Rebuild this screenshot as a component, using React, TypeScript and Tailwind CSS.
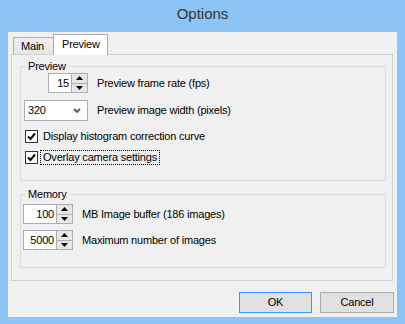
import React from 'react';

const font = "font-['Liberation_Sans',Arial,sans-serif]";

const Spin = ({ value, width }: { value: string; width: string }) => (
  <div className={`${width} h-[20px] border border-[#abadb3] bg-white flex`}>
    <div className="flex-1 flex items-center justify-end pr-[2px] text-[11px] tracking-[-0.2px] text-black">{value}</div>
    <div className="w-[16px] flex flex-col border-l border-[#acacac] bg-[#e6e6e6]">
      <div className="flex-1 flex items-center justify-center">
        <svg width="7" height="4" viewBox="0 0 7 4"><path d="M0 4 L3.5 0 L7 4 Z" fill="#000" /></svg>
      </div>
      <div className="flex-1 flex items-center justify-center border-t border-[#acacac]">
        <svg width="7" height="4" viewBox="0 0 7 4"><path d="M0 0 L3.5 4 L7 0 Z" fill="#000" /></svg>
      </div>
    </div>
  </div>
);

const Check = () => (
  <div className="w-[13px] h-[13px] border border-[#333] bg-white flex items-center justify-center">
    <svg width="11" height="11" viewBox="0 0 11 11">
      <path d="M2 5.5 L4.5 8 L9 2.5" stroke="#000" strokeWidth="2" fill="none" />
    </svg>
  </div>
);

const Group = ({ title, className, children }: { title: string; className: string; children: React.ReactNode }) => (
  <div className={`relative ml-[8px] w-[366px] border border-[#dcdcdc] ${className}`}>
    <span className="absolute -top-[8px] left-[5px] px-[2px] bg-[#f0f0f0] text-[11px] leading-[14px] tracking-[-0.2px] text-black">{title}</span>
    {children}
  </div>
);

export default function App() {
  return (
    <div className={`w-[405px] h-[324px] bg-[#8cc4f6] flex flex-col ${font}`}>
      <div className="h-[31px] flex items-center justify-center text-[15px] text-[#333] pb-[2px]">Options</div>
      <div className="ml-[7px] w-[391px] h-[287px] bg-[#f0f0f0] border border-[#9cc0e0] flex flex-col text-[11px] tracking-[-0.2px] text-black">
        <div className="ml-[3px] mt-[2px] w-[382px] flex flex-col">
          <div className="relative z-10 -mb-px h-[21px] flex items-end pl-[2px]">
            <div className="mb-px w-[40px] h-[17px] border border-b-0 border-r-0 border-[#acacac] bg-gradient-to-b from-[#f0f0f0] to-[#e5e5e5] flex items-center pl-[7px]">Main</div>
            <div className="w-[55px] h-[21px] border border-b-0 border-[#acacac] bg-white flex items-center pl-[8px] pb-[2px]">Preview</div>
          </div>
          <div className="h-[227px] border border-[#d0d0d0] bg-[#f0f0f0] flex flex-col">
            <Group title="Preview" className="mt-[11px] h-[115px] flex flex-col">
              <div className="mt-[6px] h-[20px] flex items-center">
                <div className="ml-[3px] w-[64px] flex justify-end"><Spin value="15" width="w-[40px]" /></div>
                <span className="ml-[9px]">Preview frame rate (fps)</span>
              </div>
              <div className="mt-[7px] h-[21px] flex items-center">
                <div className="ml-[3px] w-[64px] h-[21px] border border-[#abadb3] bg-white flex items-center justify-between pl-[3px] pr-[6px]">
                  <span>320</span>
                  <svg width="8" height="5" viewBox="0 0 8 5"><path d="M1 1 L4 4 L7 1" stroke="#555" strokeWidth="1.8" fill="none" /></svg>
                </div>
                <span className="ml-[9px]">Preview image width (pixels)</span>
              </div>
              <div className="mt-[6px] h-[18px] flex items-center">
                <div className="ml-[4px]"><Check /></div>
                <span className="ml-[5px]">Display histogram correction curve</span>
              </div>
              <div className="mt-[3px] h-[18px] flex items-center">
                <div className="ml-[4px]"><Check /></div>
                <span className="ml-[2px] px-[2px] h-[15px] flex items-center border border-dotted border-black">Overlay camera settings</span>
              </div>
            </Group>
            <Group title="Memory" className="mt-[13px] h-[74px] flex flex-col">
              <div className="mt-[9px] h-[20px] flex items-center">
                <div className="ml-[2px]"><Spin value="100" width="w-[50px]" /></div>
                <span className="ml-[9px]">MB Image buffer (186 images)</span>
              </div>
              <div className="mt-[6px] h-[20px] flex items-center">
                <div className="ml-[2px]"><Spin value="5000" width="w-[50px]" /></div>
                <span className="ml-[9px]">Maximum number of images</span>
              </div>
            </Group>
          </div>
        </div>
        <div className="mt-[11px] flex justify-end gap-[8px] pr-[3px]">
          <button className="w-[73px] h-[21px] border border-[#3399ff] bg-[#e1e1e1] flex items-center justify-center">OK</button>
          <button className="w-[74px] h-[21px] border border-[#adadad] bg-[#e1e1e1] flex items-center justify-center">Cancel</button>
        </div>
      </div>
    </div>
  );
}
